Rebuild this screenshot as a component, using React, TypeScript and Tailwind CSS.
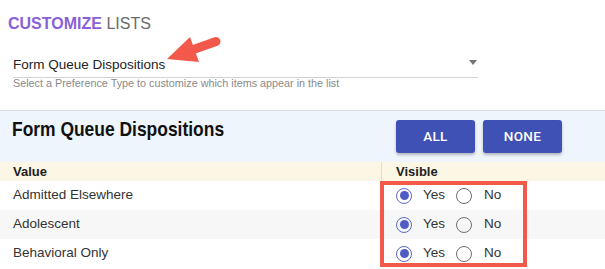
import React from "react";

function Radio({ checked }: { checked: boolean }) {
  return checked ? (
    <span className="flex h-[16px] w-[16px] shrink-0 items-center justify-center rounded-full border-[1.5px] border-[#5c6bc8]">
      <span className="block h-[9px] w-[9px] rounded-full bg-[#4f5cc4]" />
    </span>
  ) : (
    <span className="block h-[16px] w-[16px] shrink-0 rounded-full border border-[#6f6f6f]" />
  );
}

const rows = ["Admitted Elsewhere", "Adolescent", "Behavioral Only"];

export default function App() {
  return (
    <div
      className="relative h-[269px] w-[605px] overflow-hidden bg-white text-[#333]"
      style={{ fontFamily: '"Liberation Sans", Arial, sans-serif' }}
    >
      {/* Title */}
      <div className="pl-[8px] pt-[14px] text-[16px] leading-[20px]">
        <span className="font-bold text-[#8a5fd8]">CUSTOMIZE</span>
        <span className="text-[#6a6a6a]"> LISTS</span>
      </div>

      {/* Select */}
      <div className="ml-[13px] mt-[22px] w-[465px]">
        <div className="flex items-center justify-between border-b border-[#d4d4d4] pb-[3px] text-[13.5px] leading-[18px] text-[#222]">
          <span>Form Queue Dispositions</span>
          <svg width="8" height="5" viewBox="0 0 8 5" className="mr-[1px] mt-[-6px]">
            <path d="M0 0 H8 L4 5 Z" fill="#767676" />
          </svg>
        </div>
        <div className="text-[10.8px] leading-[10px] text-[#8a8a8a]">
          Select a Preference Type to customize which items appear in the list
        </div>
      </div>

      {/* Panel */}
      <div className="mt-[22px] flex h-[52px] border-t border-[#dcdcdc] bg-[#eef5fd]">
        <div className="w-[381px] pl-[12px] pt-[6px]">
          <div className="origin-left scale-x-[0.83] whitespace-nowrap text-[21px] font-bold leading-[24px] text-[#111]">
            Form Queue Dispositions
          </div>
        </div>
        <div className="flex gap-[8px] pl-[15px] pt-[9px]">
          {["ALL", "NONE"].map((b) => (
            <div
              key={b}
              className="flex h-[33px] w-[79px] items-center justify-center rounded-[3px] bg-[#3f51b5] text-[13.5px] font-medium tracking-[0.3px] text-white shadow-[0_2px_3px_rgba(0,0,0,0.25)]"
              style={{ fontFamily: "Roboto, Arial, sans-serif" }}
            >
              {b}
            </div>
          ))}
        </div>
      </div>

      {/* Table */}
      <div className="relative">
        <div className="flex h-[19px] items-center bg-[#fcf6e4] text-[13px] font-bold text-[#222]">
          <div className="w-[381px] pl-[13px]">Value</div>
          <div className="flex h-full items-center border-l border-[#e2dccb] pl-[14px]">Visible</div>
        </div>
        {rows.map((r, i) => (
          <div
            key={r}
            className={`flex h-[29px] items-center text-[13.5px] text-[#333] ${i === 1 ? "bg-[#f7f7f7]" : "bg-white"}`}
          >
            <div className="w-[381px] pl-[13px]">{r}</div>
            <div className="flex items-center pl-[15px]">
              <Radio checked />
              <span className="ml-[11px]">Yes</span>
              <span className="ml-[11px]">
                <Radio checked={false} />
              </span>
              <span className="ml-[12px]">No</span>
            </div>
          </div>
        ))}

        {/* annotation box */}
        <div className="absolute left-[380px] top-[19px] h-[86px] w-[147px] border-[4px] border-[#f3594a]" />
      </div>

      {/* annotation arrow */}
      <svg className="absolute left-0 top-0" width="605" height="269" viewBox="0 0 605 269">
        <line x1="192" y1="50" x2="216" y2="41.5" stroke="#f3594a" strokeWidth="9" strokeLinecap="round" />
        <polygon points="167,59 190,37 199,62" fill="#f3594a" />
      </svg>
    </div>
  );
}
